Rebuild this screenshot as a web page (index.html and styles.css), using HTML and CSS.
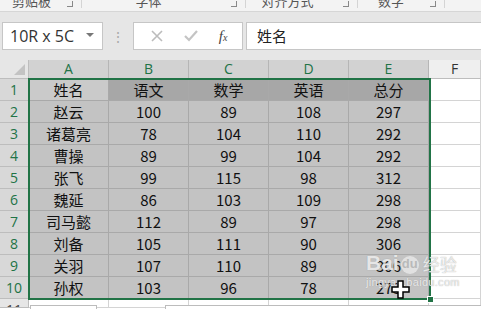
FILE: index.html
```html
<!DOCTYPE html>
<html lang="zh-CN">
<head>
    <meta charset="UTF-8">
    <title>Excel</title>
    <link rel="stylesheet" href="styles.css">
</head>
<body>
    <div class="ribbon">
        <div class="group g1"><span class="group-label">剪贴板</span><span class="launcher"></span></div>
        <div class="group g2"><span class="group-label">字体</span><span class="launcher"></span></div>
        <div class="group g3"><span class="group-label">对齐方式</span><span class="launcher"></span></div>
        <div class="group g4"><span class="group-label">数字</span><span class="launcher"></span></div>
    </div>
    <div class="formula-bar">
        <div class="name-box">
            <span>10R x 5C</span>
            <span class="caret"></span>
        </div>
        <div class="grip">⋮</div>
        <div class="fx-buttons">
            <svg width="12" height="12" viewBox="0 0 12 12"><path d="M1 1 L11 11 M11 1 L1 11" stroke="#bcbcbc" stroke-width="1.6"/></svg>
            <svg width="14" height="12" viewBox="0 0 14 12"><path d="M1 6 L5 10 L13 1" stroke="#c4c4c4" stroke-width="2.2" fill="none"/></svg>
            <span class="fx">f<sub>x</sub></span>
        </div>
        <div class="formula-input">姓名</div>
    </div>
    <div class="sheet">
        <div class="grid" id="grid"></div>
        <div class="selection"><span class="handle"></span></div>
        <div class="watermark">
            <div class="wm-top">
                <span class="wm-bai">Bai</span>
                <span class="wm-du">du</span>
                <span class="wm-jy">经验</span>
            </div>
            <div class="wm-url">jingyan.baidu.com</div>
        </div>
        <svg class="cursor" width="20" height="20" viewBox="0 0 20 20">
            <path d="M7 1 H12 V7 H18 V12 H12 V18 H7 V12 H1 V7 H7 Z" fill="#fff" stroke="#000" stroke-width="1.5"/>
        </svg>
        <div class="popup p1"></div>
        <div class="popup p2"></div>
    </div>
    <script>
        const data = [
            ['姓名', '语文', '数学', '英语', '总分'],
            ['赵云', 100, 89, 108, 297],
            ['诸葛亮', 78, 104, 110, 292],
            ['曹操', 89, 99, 104, 292],
            ['张飞', 99, 115, 98, 312],
            ['魏延', 86, 103, 109, 298],
            ['司马懿', 112, 89, 97, 298],
            ['刘备', 105, 111, 90, 306],
            ['关羽', 107, 110, 89, 306],
            ['孙权', 103, 96, 78, 273]
        ];
        const grid = document.getElementById('grid');
        function cell(cls, text) {
            const d = document.createElement('div');
            d.className = cls;
            d.textContent = text;
            grid.appendChild(d);
        }
        cell('corner', '');
        ['A', 'B', 'C', 'D', 'E'].forEach(c => cell('col-head sel', c));
        cell('col-head', 'F');
        data.forEach((row, i) => {
            cell('row-head', i + 1);
            row.forEach((v, j) => {
                let cls = 'cell on';
                if (i === 0 && j > 0) cls += ' title';
                if (i === 0 && j === 0) cls += ' active';
                cell(cls, v);
            });
            cell('cell', '');
        });
        cell('row-head last', 11);
        for (let j = 0; j < 6; j++) cell('cell', '');
    </script>
</body>
</html>
```

FILE: styles.css
```css
* {
    margin: 0;
    padding: 0;
    box-sizing: border-box;
}
body {
    width: 481px;
    height: 309px;
    overflow: hidden;
    background: #fff;
    font-family: "Noto Sans CJK SC", sans-serif;
}
.ribbon {
    height: 12px;
    background: #f3f3f3;
    border-bottom: 1px solid #d6d6d6;
    display: grid;
    grid-template-columns: 82px 164px 112px 87px 1fr;
    overflow: hidden;
}
.group {
    position: relative;
    border-right: 1px solid #d4d4d4;
    height: 8px;
    text-align: center;
}
.group-label {
    display: block;
    font-size: 13px;
    line-height: 13px;
    margin-top: -6px;
    color: #555;
}
.g1 .group-label { text-align: left; padding-left: 12px; }
.g2 .group-label { padding-right: 30px; }
.g3 .group-label { padding-right: 28px; }
.g4 .group-label { padding-right: 20px; }
.launcher {
    position: absolute;
    right: 8px;
    top: 1px;
    width: 6px;
    height: 6px;
    border-right: 1px solid #888;
    border-bottom: 1px solid #888;
}
.formula-bar {
    height: 48px;
    background: #e6e6e6;
    display: flex;
    align-items: flex-start;
    padding: 10px 0 0 2px;
}
.name-box {
    width: 101px;
    height: 28px;
    background: #fff;
    border: 1px solid #c6c6c6;
    display: flex;
    align-items: center;
    justify-content: space-between;
    padding: 0 8px 0 7px;
    font-family: "Open Sans", sans-serif;
    font-size: 16px;
    color: #333;
}
.caret {
    width: 0;
    height: 0;
    border-left: 4px solid transparent;
    border-right: 4px solid transparent;
    border-top: 4px solid #777;
    margin-top: -2px;
}
.grip {
    width: 30px;
    text-align: center;
    color: #aaa;
    font-size: 14px;
    line-height: 28px;
}
.fx-buttons {
    width: 110px;
    height: 28px;
    background: #fff;
    border: 1px solid #c6c6c6;
    display: flex;
    align-items: center;
    justify-content: space-around;
    padding: 0 4px 0 6px;
}
.fx {
    font-family: "Liberation Serif", serif;
    font-style: italic;
    font-size: 15px;
    color: #444;
}
.fx sub {
    font-size: 10px;
    vertical-align: 0;
}
.formula-input {
    flex: 1;
    height: 28px;
    margin-left: 3px;
    background: #fff;
    border: 1px solid #c6c6c6;
    border-right: none;
    padding-left: 10px;
    font-size: 15px;
    line-height: 26px;
    color: #222;
}
.sheet {
    position: relative;
}
.grid {
    display: grid;
    grid-template-columns: 29px repeat(5, 80px) 1fr;
    grid-template-rows: 19px repeat(10, 22px) 9px;
    overflow: hidden;
}
.corner {
    background: #e6e6e6;
    border-right: 1px solid #bdbdbd;
    border-bottom: 1px solid #bdbdbd;
    position: relative;
}
.corner::after {
    content: "";
    position: absolute;
    right: 3px;
    bottom: 3px;
    border-left: 11px solid transparent;
    border-bottom: 11px solid #c3c3c3;
}
.col-head {
    background: #efefef;
    border-right: 1px solid #d0d0d0;
    border-bottom: 1px solid #bdbdbd;
    font-family: "Open Sans", sans-serif;
    font-size: 14px;
    line-height: 18px;
    text-align: center;
    color: #333;
}
.col-head.sel {
    background: #d2d2d2;
    border-right-color: #b6b6b6;
    color: #217346;
}
.col-head:last-child {
    text-align: right;
    padding-right: 5px;
}
.row-head {
    background: #d8d8d8;
    border-right: 1px solid #bdbdbd;
    border-bottom: 1px solid #bdbdbd;
    font-family: "Open Sans", sans-serif;
    font-size: 14px;
    line-height: 22px;
    text-align: center;
    color: #217346;
    overflow: hidden;
}
.row-head.last {
    background: #e6e6e6;
    color: #444;
}
.cell {
    border-right: 1px solid #d4d4d4;
    border-bottom: 1px solid #d4d4d4;
    font-size: 15px;
    line-height: 21px;
    text-align: center;
    color: #111;
}
.cell.on {
    background: #c3c3c3;
    border-color: #a9a9a9;
}
.cell.title {
    background: #a7a7a7;
}
.cell.active {
    background: #cacaca;
}
.selection {
    position: absolute;
    left: 28px;
    top: 18px;
    width: 403px;
    height: 222px;
    border: 2px solid #217346;
    pointer-events: none;
}
.handle {
    position: absolute;
    right: -5px;
    bottom: -5px;
    width: 7px;
    height: 7px;
    background: #217346;
    border: 1px solid #fff;
}
.watermark {
    position: absolute;
    left: 366px;
    top: 192px;
    color: rgba(255, 255, 255, 0.75);
    text-shadow: 0 0 1px #9a9a9a;
}
.wm-top {
    display: flex;
    align-items: flex-end;
    gap: 2px;
}
.wm-bai {
    font-family: "Liberation Sans", sans-serif;
    font-weight: bold;
    font-size: 21px;
    line-height: 22px;
}
.wm-du {
    font-family: "Liberation Sans", sans-serif;
    font-weight: bold;
    font-size: 13px;
    line-height: 16px;
    width: 18px;
    height: 18px;
    border-radius: 50%;
    background: rgba(255, 255, 255, 0.5);
    color: rgba(180, 180, 180, 0.9);
    text-align: center;
    text-shadow: none;
}
.wm-jy {
    font-size: 17px;
    line-height: 20px;
    margin-left: 2px;
}
.wm-url {
    font-family: "Liberation Sans", sans-serif;
    font-size: 11px;
    letter-spacing: 0.3px;
    margin-top: 2px;
}
.cursor {
    position: absolute;
    left: 391px;
    top: 220px;
}
.popup {
    position: absolute;
    top: 245px;
    height: 4px;
    background: #fff;
    border: 1px solid #bcbcbc;
    border-bottom: none;
}
.p1 {
    left: 30px;
    width: 67px;
}
.p2 {
    left: 165px;
    width: 320px;
}
```
